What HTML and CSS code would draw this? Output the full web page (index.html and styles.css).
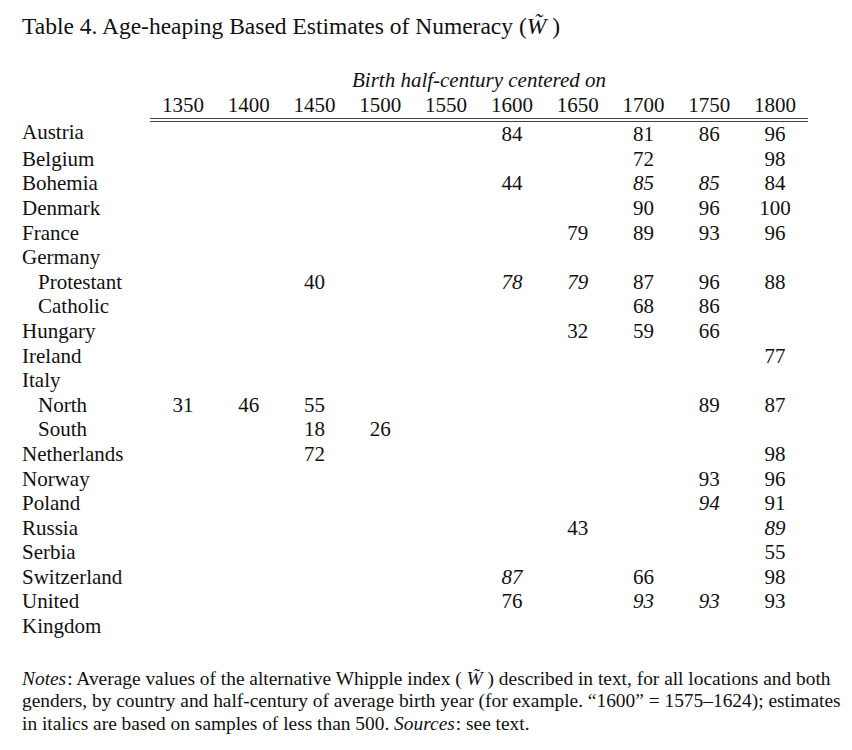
FILE: index.html
```html
<!DOCTYPE html>
<html lang="en">
<head>
<meta charset="utf-8">
<title>Table 4</title>
<link rel="stylesheet" href="styles.css">
</head>
<body>
<div class="page">
  <h1 class="title">Table 4. Age-heaping Based Estimates of Numeracy (<i class="wt">W̃</i> )</h1>
  <table class="data">
    <colgroup>
      <col class="c-label">
      <col class="c-num"><col class="c-num"><col class="c-num"><col class="c-num"><col class="c-num">
      <col class="c-num"><col class="c-num"><col class="c-num"><col class="c-num"><col class="c-num">
    </colgroup>
    <thead>
      <tr><th></th><th colspan="10" class="span-head">Birth half-century centered on</th></tr>
      <tr class="years"><th class="blank"></th><th>1350</th><th>1400</th><th>1450</th><th>1500</th><th>1550</th><th>1600</th><th>1650</th><th>1700</th><th>1750</th><th>1800</th></tr>
    </thead>
    <tbody>
      <tr><td class="lab">Austria</td><td></td><td></td><td></td><td></td><td></td><td>84</td><td></td><td>81</td><td>86</td><td>96</td></tr>
      <tr><td class="lab">Belgium</td><td></td><td></td><td></td><td></td><td></td><td></td><td></td><td>72</td><td></td><td>98</td></tr>
      <tr><td class="lab">Bohemia</td><td></td><td></td><td></td><td></td><td></td><td>44</td><td></td><td><i>85</i></td><td><i>85</i></td><td>84</td></tr>
      <tr><td class="lab">Denmark</td><td></td><td></td><td></td><td></td><td></td><td></td><td></td><td>90</td><td>96</td><td>100</td></tr>
      <tr><td class="lab">France</td><td></td><td></td><td></td><td></td><td></td><td></td><td>79</td><td>89</td><td>93</td><td>96</td></tr>
      <tr><td class="lab">Germany</td><td></td><td></td><td></td><td></td><td></td><td></td><td></td><td></td><td></td><td></td></tr>
      <tr><td class="lab sub">Protestant</td><td></td><td></td><td>40</td><td></td><td></td><td><i>78</i></td><td><i>79</i></td><td>87</td><td>96</td><td>88</td></tr>
      <tr><td class="lab sub">Catholic</td><td></td><td></td><td></td><td></td><td></td><td></td><td></td><td>68</td><td>86</td><td></td></tr>
      <tr><td class="lab">Hungary</td><td></td><td></td><td></td><td></td><td></td><td></td><td>32</td><td>59</td><td>66</td><td></td></tr>
      <tr><td class="lab">Ireland</td><td></td><td></td><td></td><td></td><td></td><td></td><td></td><td></td><td></td><td>77</td></tr>
      <tr><td class="lab">Italy</td><td></td><td></td><td></td><td></td><td></td><td></td><td></td><td></td><td></td><td></td></tr>
      <tr><td class="lab sub">North</td><td>31</td><td>46</td><td>55</td><td></td><td></td><td></td><td></td><td></td><td>89</td><td>87</td></tr>
      <tr><td class="lab sub">South</td><td></td><td></td><td>18</td><td>26</td><td></td><td></td><td></td><td></td><td></td><td></td></tr>
      <tr><td class="lab">Netherlands</td><td></td><td></td><td>72</td><td></td><td></td><td></td><td></td><td></td><td></td><td>98</td></tr>
      <tr><td class="lab">Norway</td><td></td><td></td><td></td><td></td><td></td><td></td><td></td><td></td><td>93</td><td>96</td></tr>
      <tr><td class="lab">Poland</td><td></td><td></td><td></td><td></td><td></td><td></td><td></td><td></td><td><i>94</i></td><td>91</td></tr>
      <tr><td class="lab">Russia</td><td></td><td></td><td></td><td></td><td></td><td></td><td>43</td><td></td><td></td><td><i>89</i></td></tr>
      <tr><td class="lab">Serbia</td><td></td><td></td><td></td><td></td><td></td><td></td><td></td><td></td><td></td><td>55</td></tr>
      <tr><td class="lab">Switzerland</td><td></td><td></td><td></td><td></td><td></td><td><i>87</i></td><td></td><td>66</td><td></td><td>98</td></tr>
      <tr><td class="lab">United<br>Kingdom</td><td></td><td></td><td></td><td></td><td></td><td>76</td><td></td><td><i>93</i></td><td><i>93</i></td><td>93</td></tr>
    </tbody>
  </table>
  <p class="notes"><i class="it">Notes</i>: Average values of the alternative Whipple index ( <i class="wt">W̃</i> ) described in text, for all locations and both genders, by country and half-century of average birth year (for example. “1600” = 1575–1624); estimates in italics are based on samples of less than 500. <i class="it">Sources</i>: see text.</p>
</div>
</body>
</html>
```
FILE: styles.css
```css
html, body {
  margin: 0;
  padding: 0;
  background: #ffffff;
}
body {
  font-family: "Liberation Serif", "Times New Roman", serif;
  color: #111111;
}
.page {
  padding: 13px 0 0 22px;
}
.title {
  margin: 0;
  font-size: 23.5px;
  font-weight: normal;
  line-height: 27px;
}
.wt {
  font-style: italic;
}
.it {
  padding-right: 1px;
}
.data {
  margin-top: 28px;
  border-collapse: collapse;
  border-spacing: 0;
  table-layout: fixed;
  width: 786px;
  font-size: 21px;
}
.c-label { width: 128px; }
.c-num { width: 65.8px; }
.data th, .data td {
  padding: 0;
  font-weight: normal;
  line-height: 24.6px;
  text-align: center;
  vertical-align: top;
}
.span-head {
  font-style: italic;
}
.years th {
  border-bottom: 4px double #444444;
  padding-bottom: 1px;
}
.years th.blank {
  border-bottom: none;
}
.data td.lab {
  text-align: left;
  white-space: nowrap;
}
.data td.sub {
  padding-left: 16px;
}
.notes {
  margin: 29px 0 0 0;
  width: 824px;
  font-size: 19.4px;
  line-height: 22.8px;
}
```
